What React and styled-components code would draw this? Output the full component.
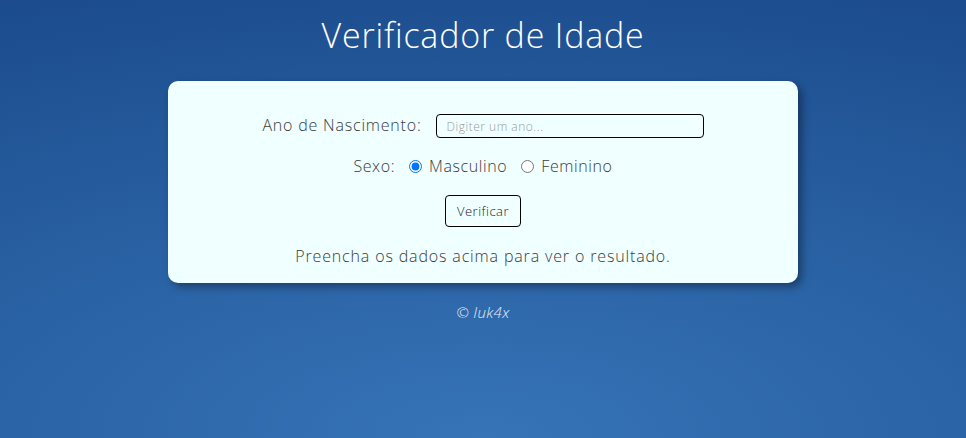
import React from "react";
import styled, { createGlobalStyle } from "styled-components";

const Global = createGlobalStyle`
  html, body { margin: 0; padding: 0; }
  body {
    min-height: 100vh;
    font-family: "Open Sans", "Lato", sans-serif;
    font-weight: 300;
    background: radial-gradient(ellipse 120% 110% at 50% 100%, #3673b7 0%, #2a63a5 45%, #1b4b8c 100%);
    background-attachment: fixed;
  }
`;

const Page = styled.div`
  min-height: 100vh;
  display: flex;
  flex-direction: column;
  align-items: center;
`;

const Title = styled.h1`
  margin: 11px 0 22px;
  font-size: 34px;
  line-height: 48px;
  font-weight: 300;
  color: #ffffff;
  letter-spacing: 0.8px;
`;

const Card = styled.main`
  box-sizing: border-box;
  width: 630px;
  height: 202px;
  padding: 32px 20px 0;
  background: #f0ffff;
  border-radius: 10px;
  box-shadow: 4px 4px 9px rgba(0, 0, 0, 0.38);
  display: flex;
  flex-direction: column;
  align-items: center;
  gap: 17px;
  color: #3a3a3a;
`;

const Row = styled.div`
  display: flex;
  align-items: center;
  height: 24px;
  font-size: 16px;
  letter-spacing: ${(p) => p.$ls || 0.8}px;
`;

const Label = styled.label`
  margin-right: ${(p) => p.$gap || 0}px;
`;

const Input = styled.input`
  box-sizing: border-box;
  width: 268px;
  height: 24px;
  margin-top: 2px;
  border: 1.5px solid #000;
  border-radius: 4px;
  padding: 0 10px;
  background: #f0ffff;
  font-family: "Open Sans", sans-serif;
  font-weight: 300;
  font-size: 12px;
  letter-spacing: 0.5px;
  outline: none;
  &::placeholder { color: #9a9a9a; }
`;

const Radio = styled.input`
  width: 13px;
  height: 13px;
  margin: 0 7px 0 14px;
`;

const Button = styled.button`
  box-sizing: border-box;
  width: 76px;
  height: 32px;
  border: 1px solid #000;
  border-radius: 4px;
  background: #f0ffff;
  font-family: "Open Sans", sans-serif;
  font-weight: 300;
  font-size: 13px;
  color: #222;
  letter-spacing: 0.5px;
  cursor: pointer;
`;

const Result = styled.p`
  margin: 0;
  line-height: 24px;
  font-size: 16px;
  letter-spacing: 0.85px;
  color: #3a3a3a;
`;

const Footer = styled.footer`
  margin-top: 19px;
  line-height: 20px;
  font-size: 15px;
  font-style: italic;
  letter-spacing: 0.4px;
  color: #e6eef8;
`;

export default function App() {
  return (
    <>
      <Global />
      <Page>
        <Title>Verificador de Idade</Title>
        <Card>
          <Row>
            <Label htmlFor="ano" $gap={14}>Ano de Nascimento:</Label>
            <Input id="ano" type="number" placeholder="Digiter um ano..." />
          </Row>
          <Row $ls={0.6}>
            <span>Sexo:</span>
            <Radio type="radio" name="sexo" id="masc" defaultChecked />
            <Label htmlFor="masc">Masculino</Label>
            <Radio type="radio" name="sexo" id="fem" />
            <Label htmlFor="fem">Feminino</Label>
          </Row>
          <Button>Verificar</Button>
          <Result>Preencha os dados acima para ver o resultado.</Result>
        </Card>
        <Footer>© luk4x</Footer>
      </Page>
    </>
  );
}
